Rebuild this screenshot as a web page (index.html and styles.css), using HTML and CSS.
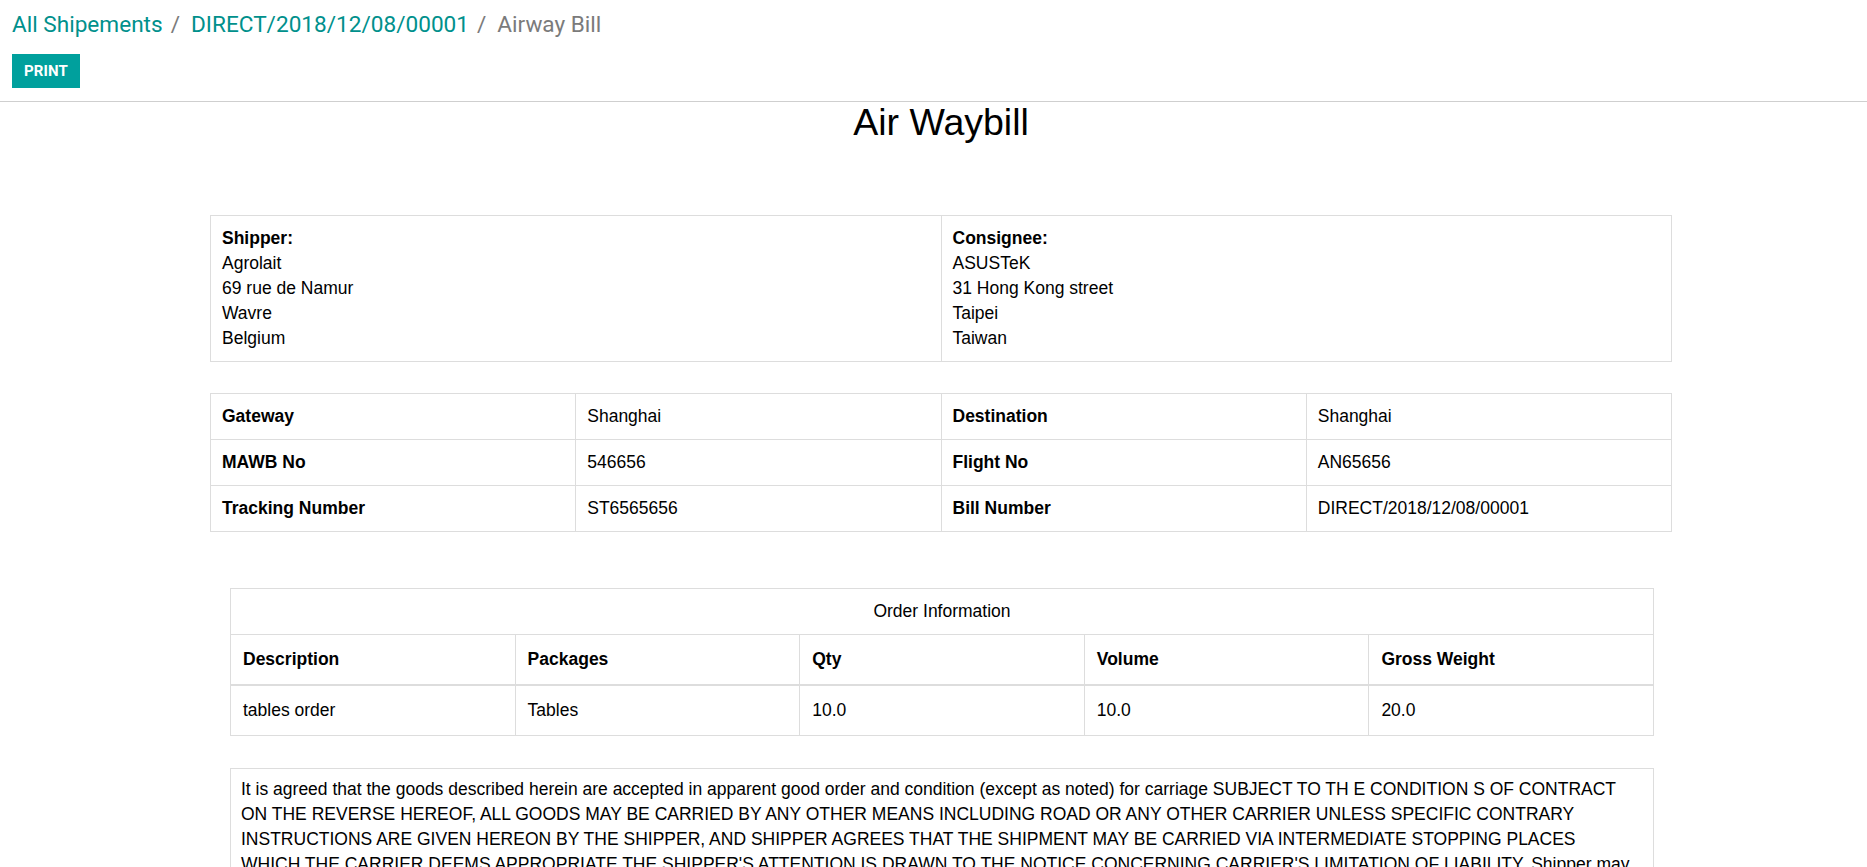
FILE: index.html
```html
<!DOCTYPE html>
<html lang="en">
<head>
<meta charset="utf-8">
<title>Airway Bill</title>
<link rel="stylesheet" href="styles.css">
</head>
<body>
<div class="app">
  <header class="control-panel">
    <ol class="breadcrumb">
      <li class="crumb"><a href="#">All Shipements</a></li>
      <li class="crumb"><a href="#">DIRECT/2018/12/08/00001</a></li>
      <li class="crumb active">Airway Bill</li>
    </ol>
    <div class="buttons">
      <button class="btn-print" type="button">PRINT</button>
    </div>
  </header>
  <main class="content">
    <div class="report">
      <h2 class="report-title">Air Waybill</h2>

      <table class="grid parties">
        <tr>
          <td>
            <strong>Shipper:</strong><br>
            Agrolait<br>
            69 rue de Namur<br>
            Wavre<br>
            Belgium
          </td>
          <td>
            <strong>Consignee:</strong><br>
            ASUSTeK<br>
            31 Hong Kong street<br>
            Taipei<br>
            Taiwan
          </td>
        </tr>
      </table>

      <table class="grid info">
        <tr>
          <th>Gateway</th><td>Shanghai</td>
          <th>Destination</th><td>Shanghai</td>
        </tr>
        <tr>
          <th>MAWB No</th><td>546656</td>
          <th>Flight No</th><td>AN65656</td>
        </tr>
        <tr>
          <th>Tracking Number</th><td>ST6565656</td>
          <th>Bill Number</th><td>DIRECT/2018/12/08/00001</td>
        </tr>
      </table>

      <table class="grid orders">
        <colgroup>
          <col class="col-fifth">
          <col class="col-fifth">
          <col class="col-fifth">
          <col class="col-fifth">
          <col class="col-fifth">
        </colgroup>
        <thead>
          <tr><th class="caption" colspan="5">Order Information</th></tr>
          <tr class="head">
            <th>Description</th>
            <th>Packages</th>
            <th>Qty</th>
            <th>Volume</th>
            <th>Gross Weight</th>
          </tr>
        </thead>
        <tbody>
          <tr>
            <td>tables order</td>
            <td>Tables</td>
            <td>10.0</td>
            <td>10.0</td>
            <td>20.0</td>
          </tr>
        </tbody>
      </table>

      <div class="terms">
        It is agreed that the goods described herein are accepted in apparent good order and condition (except as noted) for carriage SUBJECT TO TH E CONDITION S OF CONTRACT ON THE REVERSE HEREOF, ALL GOODS MAY BE CARRIED BY ANY OTHER MEANS INCLUDING ROAD OR ANY OTHER CARRIER UNLESS SPECIFIC CONTRARY INSTRUCTIONS ARE GIVEN HEREON BY THE SHIPPER, AND SHIPPER AGREES THAT THE SHIPMENT MAY BE CARRIED VIA INTERMEDIATE STOPPING PLACES<br>WHICH THE CARRIER DEEMS APPROPRIATE THE SHIPPER'S ATTENTION IS DRAWN TO THE NOTICE CONCERNING CARRIER'S LIMITATION OF LIABILITY. Shipper may increase such limitation of liability by declaring a higher value for carriage and paying a supplemental charge if required.
      </div>
    </div>
  </main>
</div>
</body>
</html>
```
FILE: styles.css
```css
html, body {
  margin: 0;
  padding: 0;
  height: 100%;
  background: #ffffff;
}

.app {
  height: 100vh;
  display: flex;
  flex-direction: column;
  overflow: hidden;
}

.control-panel {
  flex: none;
  padding: 12px 12px 13px 12px;
  border-bottom: 1px solid #cfcfcf;
  font-family: Roboto, "Liberation Sans", sans-serif;
}

.breadcrumb {
  list-style: none;
  margin: 0 0 16px 0;
  padding: 0;
  display: flex;
  font-size: 22.6px;
  line-height: 26px;
  height: 26px;
  white-space: nowrap;
}

.crumb a {
  color: #00908c;
  text-decoration: none;
}

.crumb + .crumb::before {
  content: "/";
  color: #7b7b7b;
  padding: 0 11px 0 8px;
}

.crumb.active {
  color: #7b7b7b;
}

.buttons {
  display: flex;
}

.btn-print {
  height: 34px;
  width: 68px;
  padding: 0;
  border: none;
  border-radius: 0;
  background: #00a09d;
  color: #ffffff;
  font-family: Roboto, "Liberation Sans", sans-serif;
  font-weight: 700;
  font-size: 15px;
  letter-spacing: 0.1px;
  cursor: pointer;
}

.content {
  flex: 1;
  overflow: hidden;
  font-family: "Liberation Sans", Arial, sans-serif;
  font-size: 17.5px;
  line-height: 25px;
  color: #000000;
}

.report {
  margin-left: 210px;
  width: 1462px;
}

.report-title {
  margin: 0;
  text-align: center;
  font-weight: 400;
  font-size: 37.5px;
  line-height: 41px;
}

.grid {
  width: 100%;
  border-collapse: collapse;
  table-layout: fixed;
}

.grid th,
.grid td {
  border: 1px solid #dddddd;
  text-align: left;
  vertical-align: top;
  padding: 10px 10px 10px 11px;
}

.grid th {
  font-weight: 700;
}

.parties {
  margin-top: 72px;
}

.parties td {
  width: 50%;
}

.info {
  margin-top: 31px;
}

.orders {
  margin: 56px 18px 0 20px;
  width: 1424px;
}

.col-fifth {
  width: 20%;
}

.orders .caption {
  text-align: center;
  font-weight: 400;
  padding: 10px;
}

.orders .head th {
  padding: 12px 12px 12px 12px;
  border-bottom: 2px solid #dddddd;
  vertical-align: bottom;
}

.orders tbody td {
  padding: 12px 12px 12px 12px;
}

.terms {
  margin: 32px 18px 0 20px;
  border: 1px solid #dddddd;
  padding: 8px 10px 10px 10px;
}
```
